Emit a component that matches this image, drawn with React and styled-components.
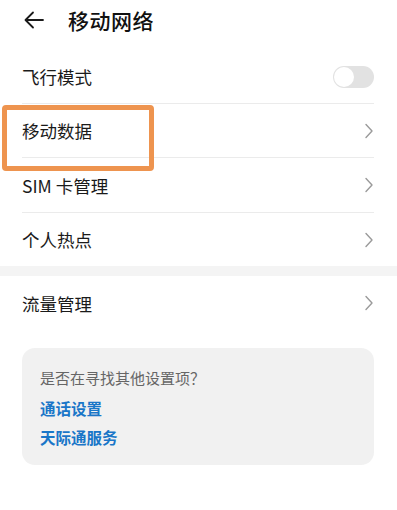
import React from "react";
import styled, { createGlobalStyle } from "styled-components";

const Global = createGlobalStyle`
  html, body { margin: 0; padding: 0; background: #fff; }
  body { font-family: "Noto Sans CJK SC", "Noto Sans", sans-serif; -webkit-font-smoothing: antialiased; }
`;

const Page = styled.div`
  position: relative;
  width: 397px;
  height: 510px;
  overflow: hidden;
  background: #fff;
`;

const Header = styled.header`
  display: flex;
  align-items: center;
  height: 40px;
  padding: 0 24px;
  gap: 24px;
`;

const Title = styled.h1`
  margin: 0;
  font-size: 21px;
  font-weight: 500;
  color: #111;
  letter-spacing: 0.5px;
`;

const Group = styled.section`
  padding: ${(p) => (p.$first ? 10 : 0)}px 23px 0 22px;
`;

const Row = styled.div`
  display: flex;
  align-items: center;
  justify-content: space-between;
  height: ${(p) => p.$h || 54}px;
  border-bottom: ${(p) => (p.$last ? "none" : "1px solid #ebebeb")};
  box-sizing: border-box;
`;

const Label = styled.span`
  font-size: 17.5px;
  color: #1a1a1a;
  font-weight: 400;
`;

const Switch = styled.div`
  position: relative;
  width: 41px;
  height: 22px;
  border-radius: 11px;
  background: #e2e2e2;
  &::after {
    content: "";
    position: absolute;
    left: 1px;
    top: 1px;
    width: 20px;
    height: 20px;
    border-radius: 50%;
    background: #fff;
  }
`;

const Band = styled.div`
  height: 10px;
  background: #f4f4f4;
`;

const Card = styled.div`
  margin: 18px 23px 0 22px;
  background: #f1f1f1;
  border-radius: 13px;
  padding: 20px 18px 18px;
  display: flex;
  flex-direction: column;
  gap: 10px;
`;

const Hint = styled.div`
  font-size: 15px;
  color: #666;
  line-height: 20px;
  margin-bottom: 1px;
`;

const Link = styled.div`
  font-size: 15.5px;
  color: #1a76c8;
  font-weight: 600;
  line-height: 19px;
`;

const Highlight = styled.div`
  position: absolute;
  left: 2px;
  top: 105px;
  width: 152px;
  height: 66px;
  box-sizing: border-box;
  border: 5px solid #ee944f;
  border-radius: 4px;
  pointer-events: none;
`;

const Chevron = () => (
  <svg width="10" height="16" viewBox="0 0 10 16">
    <path d="M2 1.5 L8 8 L2 14.5" fill="none" stroke="#9a9a9a" strokeWidth="1.4" strokeLinecap="round" strokeLinejoin="round" />
  </svg>
);

const BackArrow = () => (
  <svg width="20" height="18" viewBox="0 0 20 18">
    <path d="M19 9 H2 M9 1.5 L1.5 9 L9 16.5" fill="none" stroke="#1a1a1a" strokeWidth="1.8" strokeLinecap="round" strokeLinejoin="round" />
  </svg>
);

export default function App() {
  return (
    <Page>
      <Global />
      <Header>
        <BackArrow />
        <Title>移动网络</Title>
      </Header>
      <Group $first>
        <Row>
          <Label>飞行模式</Label>
          <Switch />
        </Row>
        <Row>
          <Label>移动数据</Label>
          <Chevron />
        </Row>
        <Row $h={55}>
          <Label>SIM 卡管理</Label>
          <Chevron />
        </Row>
        <Row $h={53} $last>
          <Label>个人热点</Label>
          <Chevron />
        </Row>
      </Group>
      <Band />
      <Group>
        <Row $last>
          <Label>流量管理</Label>
          <Chevron />
        </Row>
      </Group>
      <Card>
        <Hint>是否在寻找其他设置项？</Hint>
        <Link>通话设置</Link>
        <Link>天际通服务</Link>
      </Card>
      <Highlight />
    </Page>
  );
}
